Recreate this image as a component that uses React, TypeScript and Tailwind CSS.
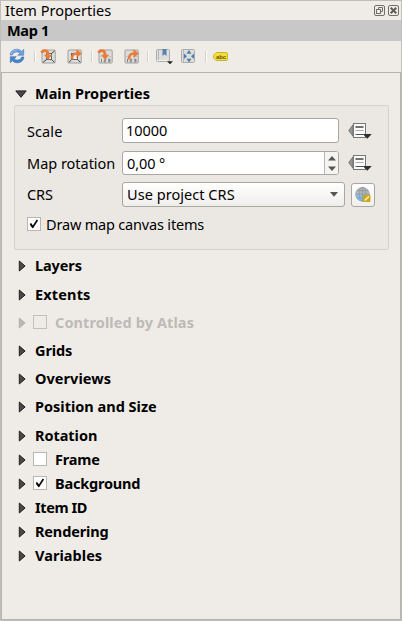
import React from 'react';

function Check({ checked = false, disabled = false }: { checked?: boolean; disabled?: boolean }) {
  return (
    <span className={`block h-[14px] w-[14px] shrink-0 border ${disabled ? 'border-[#c3c0bc] bg-[#efece7]' : 'border-[#b9b5b1] bg-white'}`}>
      {checked && (
        <svg width="12" height="12" viewBox="0 0 12 12" fill="none" stroke="#0a0a0a">
          <path d="M2.4 5.4 4.9 9 9.4 2" strokeWidth="1.7" />
          <path d="M2.6 6.3 4.9 9.5" strokeWidth="1.6" />
        </svg>
      )}
    </span>
  );
}

function Arrow({ disabled = false }: { disabled?: boolean }) {
  return (
    <svg className="shrink-0" width="8" height="12" viewBox="0 0 8 12">
      <path d="M1.3 1 7.1 6 1.3 11Z" fill={disabled ? '#b9b6b3' : '#484848'} stroke={disabled ? '#b5b2af' : '#222'} strokeWidth="1" />
    </svg>
  );
}

type Section = { label: string; cls: string; track: string; check?: boolean; disabled?: boolean };

const sections: Section[] = [
  { label: 'Layers', cls: 'h-7', track: 'tracking-[-0.1px]' },
  { label: 'Extents', cls: 'mt-px h-7', track: 'tracking-[0.15px]' },
  { label: 'Controlled by Atlas', cls: 'h-7', track: 'tracking-[0.1px]', check: false, disabled: true },
  { label: 'Grids', cls: 'h-7', track: 'tracking-[-0.1px]' },
  { label: 'Overviews', cls: 'h-7', track: 'tracking-[0.05px]' },
  { label: 'Position and Size', cls: 'h-7', track: 'tracking-[0px]' },
  { label: 'Rotation', cls: 'mt-[3px] h-6', track: 'tracking-[-0.05px]' },
  { label: 'Frame', cls: 'h-6', track: 'tracking-[-0.2px]', check: false },
  { label: 'Background', cls: 'h-6', track: 'tracking-[-0.2px]', check: true },
  { label: 'Item ID', cls: 'h-6', track: 'tracking-[-0.4px]' },
  { label: 'Rendering', cls: 'h-6', track: 'tracking-[-0.15px]' },
  { label: 'Variables', cls: 'h-6', track: 'tracking-[0.05px]' },
];

function SectionRow({ s }: { s: Section }) {
  return (
    <div className={`flex items-center pl-4 ${s.cls} ${s.disabled ? 'text-[#bdbab7]' : ''}`}>
      <Arrow disabled={s.disabled} />
      {s.check !== undefined && (
        <span className="mt-[-2px] ml-[7px] -mr-[1px]">
          <Check checked={s.check} disabled={s.disabled} />
        </span>
      )}
      <span className={`-mt-[2px] ml-[9px] font-bold ${s.track}`}>{s.label}</span>
    </div>
  );
}

function Refresh() {
  return (
    <svg className="-mt-px" width="16" height="16" viewBox="0 0 16 16">
      <path d="M1 7C1.4 3.2 4.4 1.2 7.6 1.2 9.8 1.2 11.4 2 12.6 3.3L14.7 1.3V7.3H8.7L10.8 5.2C9.9 4.3 9 3.9 7.7 3.9 5.4 3.9 3.8 5.2 3.4 7Z" fill="#6b9fd5" stroke="#4a81bf" strokeWidth=".6" />
      <path d="M15 9C14.6 12.8 11.6 14.8 8.4 14.8 6.2 14.8 4.6 14 3.4 12.7L1.3 14.7V8.7H7.3L5.2 10.8C6.1 11.7 7 12.1 8.3 12.1 10.6 12.1 12.2 10.8 12.6 9Z" fill="#4585c9" stroke="#3870b0" strokeWidth=".6" />
      <path d="M2 6.3C3 3.2 5.2 2 7.8 2" fill="none" stroke="#a9cbea" strokeWidth=".8" />
    </svg>
  );
}

function Page({ numbers = false, out = false }: { numbers?: boolean; out?: boolean }) {
  return (
    <svg className="-mt-px" width="17" height="17" viewBox="0 0 17 17">
      <rect x="2" y="2" width="13.2" height="13" rx=".8" fill="#dcdcdb" stroke="#a0a09e" />
      {numbers ? (
        <g fill="none" stroke="#7d7d7d" strokeWidth=".9">
          <path d="M4.5 10.8v3.4M7 11.2h1.7v1.4H7.1v1.3h1.8M11 11.2h2v2.7h-2M11.3 12.5H13" />
          <path d="M3.5 8.5h1.5M12 8.5h2" stroke="#bbb" />
        </g>
      ) : out ? (
        <g fill="none" stroke="#666">
          <rect x="5.5" y="5.5" width="6" height="6" fill="#f0f0f0" />
          <path d="M3 14.4 5.5 11.5M14.5 14.4 11.5 11.5" stroke="#444" />
        </g>
      ) : (
        <g fill="none" stroke="#666">
          <rect x="6.5" y="5.5" width="5" height="6" fill="#f0f0f0" />
          <path d="M3 14.4 6.5 11.5M14.5 14.4 11.5 11.5M14.5 3 11.5 5.5" stroke="#444" />
        </g>
      )}
      {out ? (
        <g>
          <path d="M6.2 11.5C5.8 7.4 7.3 5.6 11 5.6" fill="none" stroke="#e97c38" strokeWidth="2.5" />
          <path d="M10.4 1.2 15.9 5.6 10.4 10.1Z" fill="#e97c38" />
        </g>
      ) : (
        <g>
          <path d="M1.2 4.6C4.2 1.3 8.3 2.1 8 7.2" fill="none" stroke="#e97c38" strokeWidth="2.8" />
          <path d="M3.9 6.7H12.2L8.2 11.8Z" fill="#e97c38" />
        </g>
      )}
    </svg>
  );
}

function Bookmark() {
  return (
    <svg width="18" height="17" viewBox="0 0 18 17">
      <rect x="1.5" y="1.5" width="13" height="12" rx="1" fill="#dededd" stroke="#acacab" />
      <path d="M3.5 2v11" stroke="#b7b7b6" />
      <path d="M7.5 1h4v7l-2-1.7-2 1.7z" fill="#5482ae" />
      <path d="M2 12.5h11" stroke="#f5f5f5" />
      <path d="M12 13.2h6l-3 3z" fill="#222" />
    </svg>
  );
}

function MovePage() {
  return (
    <svg className="-mt-px" width="17" height="17" viewBox="0 0 17 17">
      <rect x="1.5" y="1.5" width="13" height="13" rx="1" fill="#dededd" stroke="#acacab" />
      <path d="M3.5 2v12" stroke="#b7b7b6" />
      <g fill="#4d7fae">
        <path d="M9 2 11.5 5.8H6.5zM9 14.5 11.5 10.7H6.5zM4 5.5 7 8.2 4 11zM14 5.5 11 8.2 14 11z" />
      </g>
    </svg>
  );
}

function Tag() {
  return (
    <svg width="15" height="9" viewBox="0 0 15 9">
      <path d="M3.2.5H13.2Q14.5.5 14.5 1.8V7.2Q14.5 8.5 13.2 8.5H3.2L.6 5.9V3.1Z" fill="#f5de37" stroke="#cdb520" />
      <text x="3" y="6.6" fontSize="6" fontWeight="bold" fontFamily="Liberation Sans, sans-serif" fill="#5c5116" textLength="10">abc</text>
    </svg>
  );
}

function Override() {
  return (
    <svg width="24" height="18" viewBox="0 0 24 18">
      <path d="M5 2.8.7 8.5 5 14.3Z" fill="#939393" stroke="#6d6d6d" strokeWidth=".8" />
      <rect x="5.5" y="1.5" width="12" height="14" fill="#fafafa" stroke="#777" />
      <path d="M7.5 5h8" stroke="#444" strokeWidth="1.5" />
      <path d="M7.5 8.5h8" stroke="#aaa" />
      <path d="M7.5 12.5h8" stroke="#555" />
      <path d="M14.8 12h9l-4.5 4.7z" fill="#303030" />
    </svg>
  );
}

function Globe() {
  return (
    <svg width="18" height="18" viewBox="0 0 18 18">
      <circle cx="8.5" cy="8.2" r="7" fill="#b3b6b8" />
      <path d="M1.5 8.5h14A7 7 0 0 1 1.5 8.5" fill="#8dbce6" />
      <g fill="none" stroke="#7b858c" strokeWidth=".6">
        <circle cx="8.5" cy="8.2" r="6.9" strokeOpacity=".5" />
        <ellipse cx="8.5" cy="8.2" rx="3.3" ry="7" strokeOpacity=".7" />
        <path d="M8.5 1.2v14M1.5 8.2h14M2.8 4.7h11.4M2.8 11.7h11.4" strokeOpacity=".7" />
      </g>
      <rect x="9" y="9" width="7.5" height="7" rx="1" fill="#cda716" />
      <path d="M10.8 14.6 14.8 10.4" stroke="#fff6c7" strokeWidth="1.5" />
    </svg>
  );
}

function Sep({ cls }: { cls: string }) {
  return <span className={`h-[11px] w-[2px] border-l border-[#d3d0cc] bg-white ${cls}`} />;
}

export default function App() {
  return (
    <div className="flex h-[621px] w-[402px] flex-col border border-[#c1bdb9] bg-[#efece7] font-['Noto_Sans',sans-serif] text-[14.5px] leading-5 whitespace-nowrap text-black">
      <div className="flex h-[19px] shrink-0 items-center justify-between pr-[2px] pl-1">
        <span className="-mt-[2px] tracking-[0px]">Item Properties</span>
        <span className="flex gap-[3px]">
          <svg width="11" height="11" viewBox="0 0 11 11" fill="none" stroke="#716f6b">
            <rect x=".5" y=".5" width="10" height="10" rx="1.5" />
            <path d="M4.5 4.5V2.5H8.5V6.5H6.5" />
            <rect x="2.5" y="4.5" width="4" height="4" />
          </svg>
          <svg width="11" height="11" viewBox="0 0 11 11" fill="none" stroke="#716f6b">
            <rect x=".5" y=".5" width="10" height="10" rx="1.5" />
            <path d="M2.7 2.7 8.3 8.3M8.3 2.7 2.7 8.3" stroke="#605e5a" strokeWidth="2" />
          </svg>
        </span>
      </div>
      <div className="flex h-[21px] shrink-0 items-center bg-[#c8c8c8] pl-[6px] font-bold">
        <span className="-mt-[2px] tracking-[-0.3px]">Map 1</span>
      </div>
      <div className="flex h-[31px] shrink-0 items-center pl-2">
        <Refresh />
        <Sep cls="ml-[9px]" />
        <span className="ml-[4px]"><Page /></span>
        <span className="ml-[9px]"><Page out /></span>
        <Sep cls="ml-[8px]" />
        <span className="ml-[4px]"><Page numbers /></span>
        <span className="ml-[9px]"><Page numbers out /></span>
        <Sep cls="ml-[7px]" />
        <span className="ml-[6px]"><Bookmark /></span>
        <span className="ml-[7px]"><MovePage /></span>
        <Sep cls="ml-[8px]" />
        <span className="-mt-px ml-[6px]"><Tag /></span>
      </div>
      <div className="flex grow flex-col border border-[#b7b3b0]">
        <div className="flex h-8 shrink-0 items-center pt-[10px] pl-[13px]">
          <svg width="12" height="8" viewBox="0 0 12 8">
            <path d="M.8 .9H11.2L6 7.3Z" fill="#484848" stroke="#222" />
          </svg>
          <span className="-mt-[2px] ml-2 font-bold tracking-[0px]">Main Properties</span>
        </div>
        <div className="mr-[11px] ml-3 flex h-[145px] shrink-0 flex-col rounded-[2px] border border-[#d5d2ce] bg-[#ebe8e3] pt-3 pl-3">
          <div className="flex h-[25px] items-center">
            <span className="w-[95px] tracking-[0.1px]">Scale</span>
            <div className="flex h-[25px] w-[217px] items-center rounded-[3px] border border-[#aaa6a2] bg-white pl-[3px]">
              <span className="-mt-px tracking-[-0.05px]">10000</span>
            </div>
            <span className="ml-[9px]"><Override /></span>
          </div>
          <div className="mt-2 flex h-6 items-center">
            <span className="w-[95px] tracking-[-0.02px]">Map rotation</span>
            <div className="flex h-6 w-[217px] items-center overflow-hidden rounded-[3px] border border-[#aaa6a2] bg-white pl-1">
              <span className="grow tracking-[-0.1px]">0,00 °</span>
              <span className="flex h-full w-[14px] flex-col items-center justify-center gap-[5px] border-l border-[#b9b5b1] bg-[#f6f4f1]">
                <svg width="8" height="5" viewBox="0 0 8 5"><path d="M0 4.6 4 0 8 4.6Z" fill="#555" /></svg>
                <svg width="8" height="5" viewBox="0 0 8 5"><path d="M0 .4 4 5 8 .4Z" fill="#555" /></svg>
              </span>
            </div>
            <span className="ml-[9px]"><Override /></span>
          </div>
          <div className="mt-[7px] flex h-[25px] items-center">
            <span className="-mt-[2px] w-[95px] tracking-[-0.1px]">CRS</span>
            <div className="flex h-[25px] w-[223px] items-center justify-between rounded-[3px] border border-[#aaa6a2] bg-linear-to-b from-white to-[#f0eeeb] pr-[6px] pl-1">
              <span className="-mt-[2px] tracking-[0.05px]">Use project CRS</span>
              <svg width="8" height="5" viewBox="0 0 8 5"><path d="M0 0H8L4 4.8Z" fill="#555" /></svg>
            </div>
            <span className="ml-[6px] flex h-6 w-6 items-center justify-center rounded-[3px] border border-[#aaa6a2] bg-linear-to-b from-white to-[#f0eeeb]"><Globe /></span>
          </div>
          <div className="mt-[7px] flex h-5 items-center">
            <Check checked />
            <span className="ml-[5px] tracking-[-0.18px]">Draw map canvas items</span>
          </div>
        </div>
        <div className="flex flex-col pt-[2px]">
          {sections.map((s) => <SectionRow key={s.label} s={s} />)}
        </div>
      </div>
    </div>
  );
}
